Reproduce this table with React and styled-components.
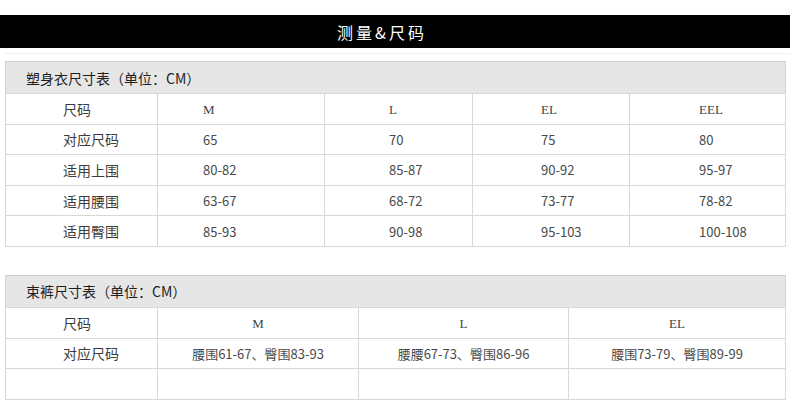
import React from 'react';
import styled, { createGlobalStyle } from 'styled-components';

const GlobalStyle = createGlobalStyle`
  body {
    margin: 0;
    background: #fff;
    font-family: "Noto Sans CJK SC", "Liberation Sans", sans-serif;
  }
`;

const bodyColumns = [
  { width: 152, indent: 57 },
  { width: 167, indent: 45 },
  { width: 148, indent: 64 },
  { width: 157, indent: 68 },
  { width: 156, indent: 69 },
];

const bodyRows = [
  ['尺码', 'M', 'L', 'EL', 'EEL'],
  ['对应尺码', '65', '70', '75', '80'],
  ['适用上围', '80-82', '85-87', '90-92', '95-97'],
  ['适用腰围', '63-67', '68-72', '73-77', '78-82'],
  ['适用臀围', '85-93', '90-98', '95-103', '100-108'],
];

const pantsColumns = [
  { width: 152, indent: 57 },
  { width: 201 },
  { width: 210 },
  { width: 217 },
];

const pantsRows = [
  ['尺码', 'M', 'L', 'EL'],
  ['对应尺码', '腰围61-67、臀围83-93', '腰腰67-73、臀围86-96', '腰围73-79、臀围89-99'],
  ['', '', '', ''],
];

function SizeChart({ title, columns, rows, gap }) {
  return (
    <Table $gap={gap}>
      <colgroup>
        {columns.map((c, i) => (
          <col key={i} style={{ width: c.width }} />
        ))}
      </colgroup>
      <tbody>
        <tr>
          <Caption colSpan={columns.length}>{title}</Caption>
        </tr>
        {rows.map((row, r) => (
          <tr key={r}>
            {row.map((text, i) => (
              <Cell key={i} $indent={columns[i].indent} $label={i === 0}>
                {r === 0 && i > 0 ? <SizeLabel>{text}</SizeLabel> : text}
              </Cell>
            ))}
          </tr>
        ))}
      </tbody>
    </Table>
  );
}

export default function App() {
  return (
    <Page>
      <GlobalStyle />
      <TitleBar>测量&amp;尺码</TitleBar>
      <Divider />
      <SizeChart title="塑身衣尺寸表（单位：CM）" columns={bodyColumns} rows={bodyRows} gap={7} />
      <SizeChart title="束裤尺寸表（单位：CM）" columns={pantsColumns} rows={pantsRows} gap={28} />
    </Page>
  );
}

const Page = styled.div`
  width: 790px;
  height: 409px;
  padding-top: 15px;
  box-sizing: border-box;
  overflow: hidden;
`;

const TitleBar = styled.div`
  height: 33px;
  background: #000;
  color: #fff;
  display: flex;
  align-items: center;
  justify-content: center;
  padding-right: 26px;
  font-size: 16px;
  letter-spacing: 3px;
`;

const Divider = styled.div`
  height: 1px;
  margin: 5px 0 0 5px;
  background: #f0f0f0;
`;

const Table = styled.table`
  width: 780px;
  margin: ${(p) => p.$gap}px 0 0 5px;
  border-collapse: collapse;
  table-layout: fixed;
  border: 1px solid #d4d4d4;
  color: #4a4a4a;
  font-size: 13px;
`;

const Caption = styled.th`
  height: 31px;
  padding: 0 0 0 20px;
  background: #e6e6e6;
  border-top: 1px solid #cfcfcf;
  text-align: left;
  font-weight: normal;
  color: #1e1e1e;
  font-size: 14px;
`;

const Cell = styled.td`
  height: 29.6px;
  padding: 0 0 0 ${(p) => p.$indent || 0}px;
  border: 1px solid #d8d8d8;
  text-align: ${(p) => (p.$indent ? 'left' : 'center')};
  white-space: nowrap;
  font-size: ${(p) => (p.$label ? 14 : 13)}px;
  color: ${(p) => (p.$label ? '#3c3c3c' : '#4a4a4a')};
`;

const SizeLabel = styled.span`
  font-family: "Liberation Serif", serif;
  font-size: 13px;
  color: #444;
`;
